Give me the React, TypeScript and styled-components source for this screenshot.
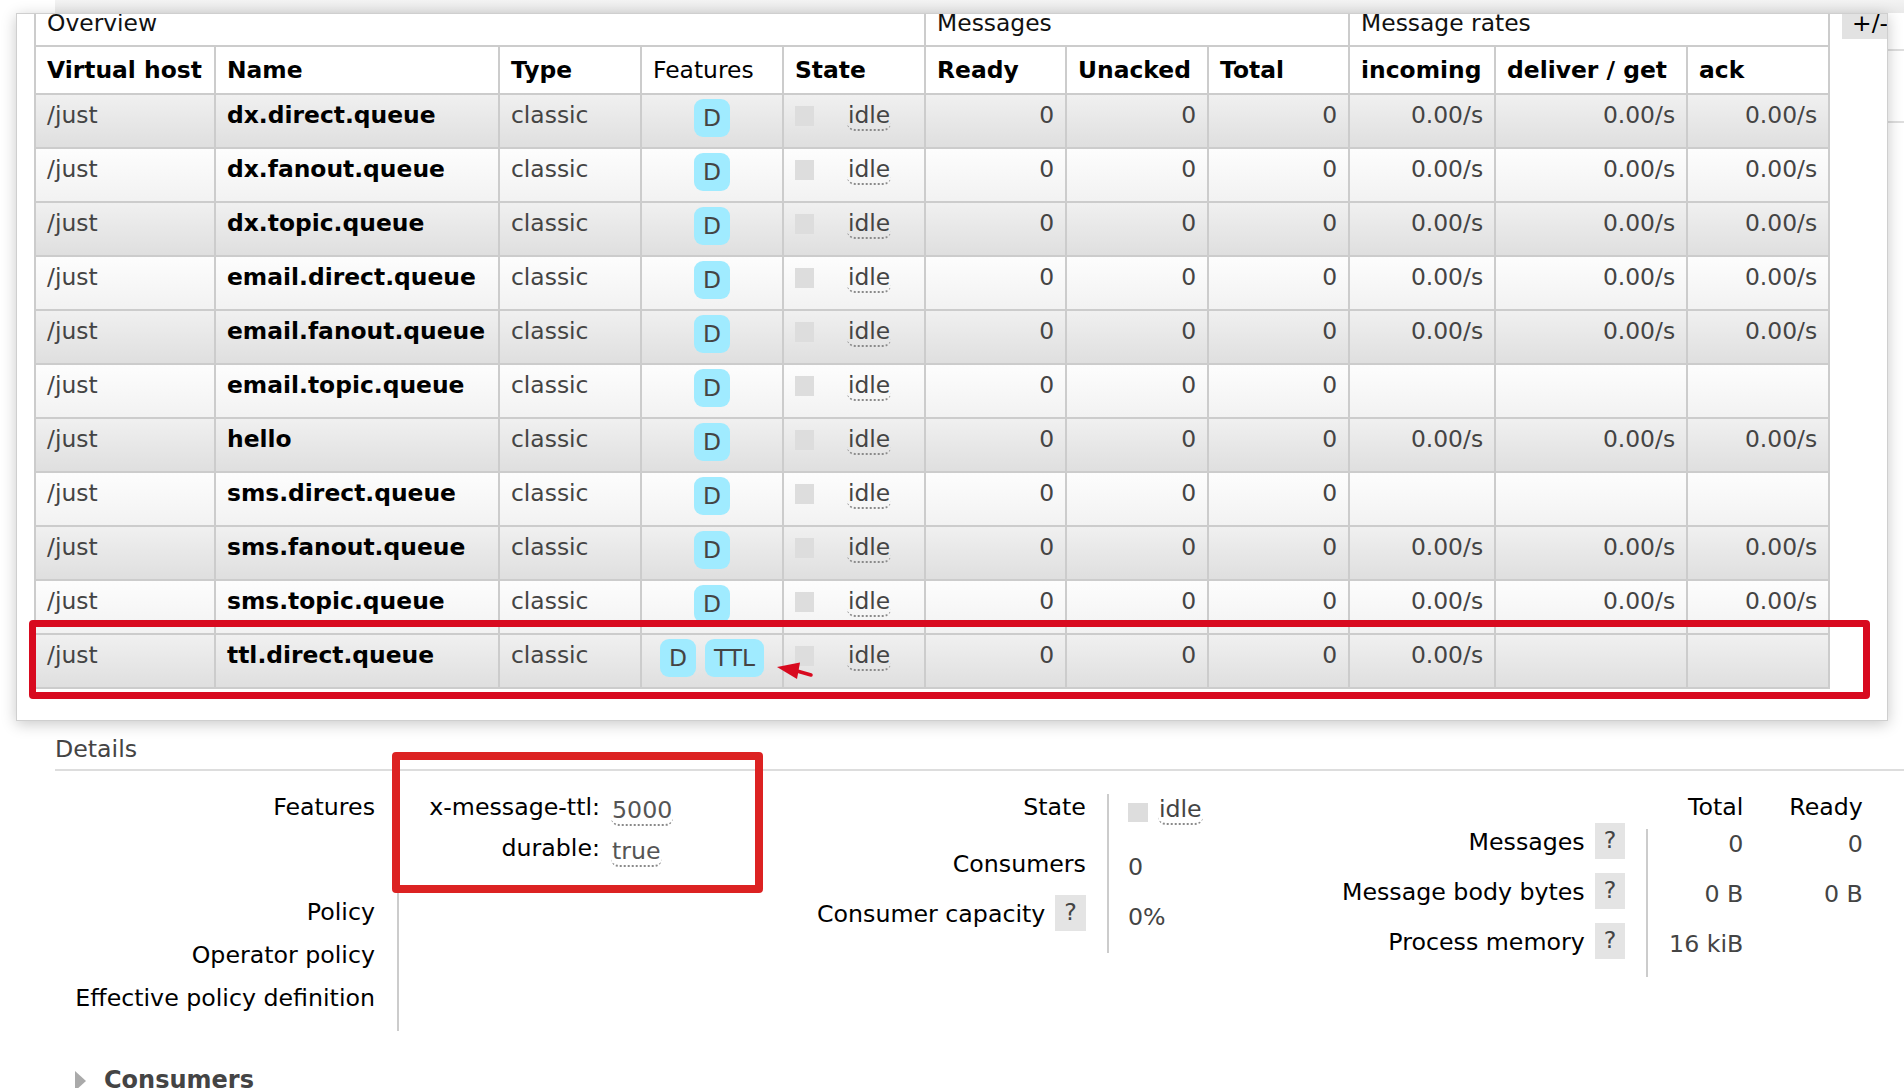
import React from 'react';
import styled, { createGlobalStyle } from 'styled-components';

const GlobalStyle = createGlobalStyle`
  html, body { margin: 0; padding: 0; background: #fff; overflow: hidden; }
  body { font-family: "DejaVu Sans", Verdana, sans-serif; }
`;

const Page = styled.div`
  position: relative;
  width: 1904px;
  height: 1088px;
  overflow: hidden;
  color: #000;
  font-family: "DejaVu Sans", Verdana, sans-serif;
  background:
    linear-gradient(#dedede, #dedede) no-repeat 1888px 49px / 16px 2px,
    linear-gradient(#dedede, #dedede) no-repeat 1888px 121px / 16px 2px,
    #fff;
`;

const TopStrip = styled.div`
  height: 13px;
  margin-left: 55px;
  background: linear-gradient(#f3f3f3, #e9e9e9);
`;

const Card = styled.section`
  position: relative;
  box-sizing: border-box;
  width: 1872px;
  margin-left: 16px;
  border: 1px solid #cfcfcf;
  background: #fff;
  box-shadow: 0 3px 14px rgba(0, 0, 0, 0.22);
  overflow: hidden;
  padding: 0 0 31px 17px;
`;

const TableRow = styled.div`
  display: flex;
  align-items: flex-start;
  gap: 12px;
  margin-top: -16px;
`;

const QueueTable = styled.table`
  flex: none;
  width: 1796px;
  table-layout: fixed;
  border-collapse: collapse;
  border: 2px solid #ccc;
  font-size: 23.4px;
  line-height: 27px;
`;

const Col = styled.col<{ $w: number }>`
  width: ${(p) => p.$w}px;
`;

const HeadRow = styled.tr<{ $h: number }>`
  height: ${(p) => p.$h}px;
`;

const GroupTh = styled.th`
  border: 2px solid #ccc;
  padding: 0 11px 14px;
  text-align: left;
  font-weight: normal;
  line-height: 16px;
  color: #111;
  vertical-align: bottom;
  background: #fff;
  white-space: nowrap;
`;

const ColTh = styled.th<{ $plain?: boolean }>`
  border: 2px solid #ccc;
  padding: 0 11px;
  text-align: left;
  font-weight: ${(p) => (p.$plain ? 'normal' : 'bold')};
  color: #000;
  vertical-align: middle;
  background: #fff;
  white-space: nowrap;
  overflow: hidden;
`;

const DataRow = styled.tr<{ $alt: boolean }>`
  height: 54px;
  & > td {
    background: ${(p) =>
      p.$alt
        ? 'linear-gradient(#f0f0f0, #dfdfdf)'
        : 'linear-gradient(#fdfdfd, #f2f2f2)'};
  }
`;

const Td = styled.td<{ $right?: boolean; $strong?: boolean }>`
  border: 2px solid #ccc;
  padding: 7px 11px 0;
  vertical-align: top;
  text-align: ${(p) => (p.$right ? 'right' : 'left')};
  color: ${(p) => (p.$strong ? '#000' : '#444')};
  font-weight: ${(p) => (p.$strong ? 'bold' : 'normal')};
  white-space: nowrap;
  overflow: hidden;
`;

const BadgeGroup = styled.div`
  display: flex;
  justify-content: center;
  gap: 9px;
  margin-top: -3px;
`;

const Badge = styled.span`
  display: inline-block;
  padding: 6px 9px 5px;
  border-radius: 9px;
  background: #a0ebff;
  color: #444;
  line-height: 27px;
`;

const StatusKey = styled.span`
  float: left;
  width: 19px;
  height: 20px;
  margin-top: 4px;
  background: #dddddd;
`;

const StateCell = styled(Td)`
  text-align: center;
  padding-right: 0;
`;

const Dotted = styled.span`
  display: inline-block;
  line-height: 27px;
  padding: 0 1px;
  border-bottom: 2px dotted #8a8a8a;
  border-radius: 0 0 8px 8px;
`;

const PlusMinus = styled.div`
  flex: none;
  width: 60px;
  padding: 17px 10px 8px;
  background: #e2e2e2;
  font-size: 23.4px;
  line-height: 16px;
  color: #000;
`;

const DetailsTitle = styled.h2`
  margin: 15px 0 0 55px;
  padding: 0 0 6px;
  font-size: 23.7px;
  line-height: 27px;
  font-weight: normal;
  color: #444;
  border-bottom: 2px solid #dddddd;
`;

const FactsArea = styled.div`
  display: flex;
  align-items: flex-start;
  margin-top: 23px;
  padding-left: 75px;
`;

const FactsBlock = styled.div<{ $w?: number }>`
  flex: none;
  width: ${(p) => (p.$w ? `${p.$w}px` : 'auto')};
`;

const FactTable = styled.table`
  border-collapse: separate;
  border-spacing: 0;
  font-size: 23.7px;
  line-height: 27px;
`;

const FactRow = styled.tr<{ $h: number }>`
  height: ${(p) => p.$h}px;
`;

const FactTh = styled.th<{ $w: number; $pr: number }>`
  width: ${(p) => p.$w}px;
  padding: 0 ${(p) => p.$pr}px 0 0;
  text-align: right;
  font-weight: normal;
  color: #000;
  vertical-align: top;
  white-space: nowrap;
`;

const FactTd = styled.td<{ $pl: number }>`
  border-left: 2px solid #ccc;
  padding: 0 0 0 ${(p) => p.$pl}px;
  color: #444;
  vertical-align: top;
  white-space: nowrap;
`;

const NumTh = styled.th<{ $pl: number; $w: number }>`
  width: ${(p) => p.$w}px;
  padding: 0 0 0 ${(p) => p.$pl}px;
  border-left: 2px solid transparent;
  text-align: right;
  font-weight: normal;
  color: #000;
  vertical-align: top;
  white-space: nowrap;
`;

const NumTd = styled.td<{ $pl: number; $divider?: boolean }>`
  padding: 2px 0 0 ${(p) => p.$pl}px;
  border-left: 2px solid ${(p) => (p.$divider ? '#ccc' : 'transparent')};
  text-align: right;
  color: #444;
  vertical-align: top;
  white-space: nowrap;
`;

const Help = styled.span`
  display: inline-block;
  margin: -6px 0 -6px 10px;
  padding: 4px 9px 5px;
  background: #e4e4e4;
  color: #444;
  line-height: 27px;
  vertical-align: 2px;
`;

const InnerGrid = styled.div`
  display: grid;
  grid-template-columns: 180px auto;
  column-gap: 11px;
  row-gap: 9px;
  justify-content: start;
`;

const InnerKey = styled.span`
  text-align: right;
  color: #000;
`;

const InnerValue = styled.span`
  justify-self: start;
  padding-top: 3px;
  color: #555;
`;

const StateValue = styled.div`
  display: flex;
  align-items: flex-start;
  gap: 10px;
  padding-top: 2px;
`;

const StateSquare = styled.span`
  flex: none;
  width: 20px;
  height: 19px;
  margin-top: 7px;
  background: #dddddd;
`;

const PlainValue = styled.div`
  padding-top: 3px;
`;

const SectionToggle = styled.h2`
  display: flex;
  align-items: center;
  gap: 18px;
  margin: 35px 0 0 75px;
  font-size: 24px;
  line-height: 29px;
  font-weight: bold;
  color: #444;
`;

const Triangle = styled.span`
  width: 0;
  height: 0;
  border-left: 11px solid #aaaaaa;
  border-top: 10px solid transparent;
  border-bottom: 10px solid transparent;
`;

const RedFrame = styled.div<{ $x: number; $y: number; $w: number; $h: number; $b: number; $c: string }>`
  position: absolute;
  left: ${(p) => p.$x}px;
  top: ${(p) => p.$y}px;
  width: ${(p) => p.$w}px;
  height: ${(p) => p.$h}px;
  box-sizing: border-box;
  border: ${(p) => p.$b}px solid ${(p) => p.$c};
  border-radius: 4px;
  pointer-events: none;
`;

const ArrowSvg = styled.svg`
  position: absolute;
  left: 770px;
  top: 655px;
  pointer-events: none;
`;

type Queue = { name: string; features: string[]; rates: [string, string, string] };

const R = '0.00/s';
const queues: Queue[] = [
  { name: 'dx.direct.queue', features: ['D'], rates: [R, R, R] },
  { name: 'dx.fanout.queue', features: ['D'], rates: [R, R, R] },
  { name: 'dx.topic.queue', features: ['D'], rates: [R, R, R] },
  { name: 'email.direct.queue', features: ['D'], rates: [R, R, R] },
  { name: 'email.fanout.queue', features: ['D'], rates: [R, R, R] },
  { name: 'email.topic.queue', features: ['D'], rates: ['', '', ''] },
  { name: 'hello', features: ['D'], rates: [R, R, R] },
  { name: 'sms.direct.queue', features: ['D'], rates: ['', '', ''] },
  { name: 'sms.fanout.queue', features: ['D'], rates: [R, R, R] },
  { name: 'sms.topic.queue', features: ['D'], rates: [R, R, R] },
  { name: 'ttl.direct.queue', features: ['D', 'TTL'], rates: [R, '', ''] },
];

const colWidths = [180, 284, 142, 142, 142, 141, 142, 141, 146, 192, 142];

export default function App() {
  return (
    <Page>
      <GlobalStyle />
      <TopStrip />
      <Card>
        <TableRow>
          <QueueTable>
            <colgroup>
              {colWidths.map((w, i) => (
                <Col key={i} $w={w} />
              ))}
            </colgroup>
            <thead>
              <HeadRow $h={47}>
                <GroupTh colSpan={5}>Overview</GroupTh>
                <GroupTh colSpan={3}>Messages</GroupTh>
                <GroupTh colSpan={3}>Message rates</GroupTh>
              </HeadRow>
              <HeadRow $h={48}>
                <ColTh>Virtual host</ColTh>
                <ColTh>Name</ColTh>
                <ColTh>Type</ColTh>
                <ColTh $plain>Features</ColTh>
                <ColTh>State</ColTh>
                <ColTh>Ready</ColTh>
                <ColTh>Unacked</ColTh>
                <ColTh>Total</ColTh>
                <ColTh>incoming</ColTh>
                <ColTh>deliver / get</ColTh>
                <ColTh>ack</ColTh>
              </HeadRow>
            </thead>
            <tbody>
              {queues.map((q, i) => (
                <DataRow key={q.name} $alt={i % 2 === 0}>
                  <Td>/just</Td>
                  <Td $strong>{q.name}</Td>
                  <Td>classic</Td>
                  <Td>
                    <BadgeGroup>
                      {q.features.map((f) => (
                        <Badge key={f}>{f}</Badge>
                      ))}
                    </BadgeGroup>
                  </Td>
                  <StateCell>
                    <StatusKey />
                    <Dotted>idle</Dotted>
                  </StateCell>
                  <Td $right>0</Td>
                  <Td $right>0</Td>
                  <Td $right>0</Td>
                  {q.rates.map((r, j) => (
                    <Td key={j} $right>
                      {r}
                    </Td>
                  ))}
                </DataRow>
              ))}
            </tbody>
          </QueueTable>
          <PlusMinus>+/-</PlusMinus>
        </TableRow>
      </Card>

      <DetailsTitle>Details</DetailsTitle>
      <FactsArea>
        <FactsBlock $w={742}>
          <FactTable>
            <tbody>
              <FactRow $h={105}>
                <FactTh $w={300} $pr={22}>Features</FactTh>
                <FactTd $pl={21}>
                  <InnerGrid>
                    <InnerKey>x-message-ttl:</InnerKey>
                    <InnerValue>
                      <Dotted>5000</Dotted>
                    </InnerValue>
                    <InnerKey>durable:</InnerKey>
                    <InnerValue>
                      <Dotted>true</Dotted>
                    </InnerValue>
                  </InnerGrid>
                </FactTd>
              </FactRow>
              <FactRow $h={43}>
                <FactTh $w={300} $pr={22}>Policy</FactTh>
                <FactTd $pl={21} />
              </FactRow>
              <FactRow $h={43}>
                <FactTh $w={300} $pr={22}>Operator policy</FactTh>
                <FactTd $pl={21} />
              </FactRow>
              <FactRow $h={46}>
                <FactTh $w={300} $pr={22}>Effective policy definition</FactTh>
                <FactTd $pl={21} />
              </FactRow>
            </tbody>
          </FactTable>
        </FactsBlock>

        <FactsBlock $w={525}>
          <FactTable>
            <tbody>
              <FactRow $h={57}>
                <FactTh $w={268} $pr={21}>State</FactTh>
                <FactTd $pl={19}>
                  <StateValue>
                    <StateSquare />
                    <Dotted>idle</Dotted>
                  </StateValue>
                </FactTd>
              </FactRow>
              <FactRow $h={50}>
                <FactTh $w={268} $pr={21}>Consumers</FactTh>
                <FactTd $pl={19}>
                  <PlainValue>0</PlainValue>
                </FactTd>
              </FactRow>
              <FactRow $h={52}>
                <FactTh $w={268} $pr={21}>
                  Consumer capacity<Help>?</Help>
                </FactTh>
                <FactTd $pl={19}>
                  <PlainValue>0%</PlainValue>
                </FactTd>
              </FactRow>
            </tbody>
          </FactTable>
        </FactsBlock>

        <FactsBlock>
          <FactTable>
            <thead>
              <FactRow $h={35}>
                <FactTh $w={281} $pr={21} />
                <NumTh $w={75} $pl={20}>Total</NumTh>
                <NumTh $w={72} $pl={44}>Ready</NumTh>
                <NumTh $w={110} $pl={44}>Unacked</NumTh>
              </FactRow>
            </thead>
            <tbody>
              <FactRow $h={50}>
                <FactTh $w={281} $pr={21}>
                  Messages<Help>?</Help>
                </FactTh>
                <NumTd $pl={20} $divider>0</NumTd>
                <NumTd $pl={44}>0</NumTd>
                <NumTd $pl={44}>0</NumTd>
              </FactRow>
              <FactRow $h={50}>
                <FactTh $w={281} $pr={21}>
                  Message body bytes<Help>?</Help>
                </FactTh>
                <NumTd $pl={20} $divider>0 B</NumTd>
                <NumTd $pl={44}>0 B</NumTd>
                <NumTd $pl={44}>0 B</NumTd>
              </FactRow>
              <FactRow $h={48}>
                <FactTh $w={281} $pr={21}>
                  Process memory<Help>?</Help>
                </FactTh>
                <NumTd $pl={20} $divider>16 kiB</NumTd>
                <NumTd $pl={44} />
                <NumTd $pl={44} />
              </FactRow>
            </tbody>
          </FactTable>
        </FactsBlock>
      </FactsArea>

      <SectionToggle>
        <Triangle />
        Consumers
      </SectionToggle>

      <RedFrame $x={29} $y={620} $w={1841} $h={79} $b={7} $c="#d80a1f" />
      <RedFrame $x={392} $y={752} $w={371} $h={141} $b={8} $c="#dc2222" />
      <ArrowSvg width="48" height="30" viewBox="0 0 48 30">
        <line x1="27" y1="16" x2="41" y2="20" stroke="#d80a1f" strokeWidth="3.5" strokeLinecap="round" />
        <polygon points="7,12 30,7.5 27,24" fill="#d80a1f" />
      </ArrowSvg>
    </Page>
  );
}
